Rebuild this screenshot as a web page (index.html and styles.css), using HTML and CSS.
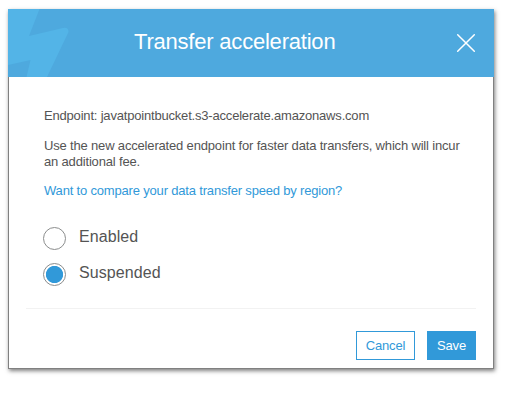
FILE: index.html
```html
<!DOCTYPE html>
<html lang="en">
<head>
<meta charset="utf-8">
<title>Transfer acceleration</title>
<link rel="stylesheet" href="styles.css">
</head>
<body>
<section class="dialog" role="dialog" aria-labelledby="title">
  <header class="header">
    <svg class="bolt" width="62" height="68" viewBox="0 0 62 68" aria-hidden="true"><path d="M0 0H31.500L21 27L55 19Q60.500 18 60.500 23L39 68H18.500L22.500 51L0 56Z"/></svg>
    <h1 class="title" id="title">Transfer acceleration</h1>
    <button class="close" aria-label="Close"><svg width="20" height="20" viewBox="0 0 20 20"><path d="M1.700 1.700L18.300 18.300M18.300 1.700L1.700 18.300"/></svg></button>
  </header>
  <div class="body">
    <p class="endpoint">Endpoint: javatpointbucket.s3-accelerate.amazonaws.com</p>
    <p class="description">Use the new accelerated endpoint for faster data transfers, which will incur<br>an additional fee.</p>
    <a class="link" href="#">Want to compare your data transfer speed by region?</a>
    <div class="options">
      <label class="option"><input type="radio" name="state"><span>Enabled</span></label>
      <label class="option"><input type="radio" name="state" checked><span>Suspended</span></label>
    </div>
  </div>
  <footer class="footer">
    <button class="button cancel">Cancel</button>
    <button class="button save">Save</button>
  </footer>
</section>
</body>
</html>
```
FILE: styles.css
```css
* { box-sizing: border-box; }
body {
  margin: 0;
  min-height: 100vh;
  padding: 9px 0 0 8px;
  background: #fff;
  color: #545454;
  font: 13px/16px "Liberation Sans", Arial, sans-serif;
}
p, h1 { margin: 0; font-weight: 400; }
button { font: inherit; cursor: pointer; }
.dialog {
  display: flex;
  flex-direction: column;
  width: 486px;
  height: 360px;
  background: #fff;
  border: 1px solid #808080;
  border-top: 0;
  box-shadow: 1px 2px 4px rgba(0, 0, 0, .5);
}
.header {
  position: relative;
  display: flex;
  align-items: center;
  flex: none;
  height: 68px;
  margin: 0 -1px;
  padding: 0 18px 0 126px;
  background: #4ea9de;
  color: #fff;
}
.bolt { position: absolute; left: 0; top: 0; fill: #53b4e7; }
.title { font-size: 22px; line-height: 28px; letter-spacing: -.21px; padding-bottom: 2px; white-space: nowrap; }
.close { display: flex; margin-left: auto; padding: 0; border: 0; background: none; }
.close path { stroke: #fff; stroke-width: 1.500; stroke-linecap: round; }
.body { padding: 31px 20px 0 35px; white-space: nowrap; }
.endpoint { letter-spacing: -.19px; }
.description { margin: 14px 0 13px; letter-spacing: -.17px; }
.link { display: block; color: #3199d9; letter-spacing: -.18px; text-decoration: none; }
.options { display: grid; gap: 12px; margin-top: 27px; }
.option { display: flex; align-items: center; gap: 13px; height: 24px; margin-left: -1px; font-size: 16px; letter-spacing: .08px; }
.option span { padding-bottom: 3px; }
.option input {
  appearance: none;
  width: 23px;
  height: 23px;
  margin: 0;
  border: 1px solid #8b8d8d;
  border-radius: 50%;
}
.option input:checked { background: radial-gradient(circle closest-side, #3199d9 8.200px, transparent 9px); }
.footer {
  display: flex;
  justify-content: flex-end;
  gap: 12px;
  height: 60px;
  margin: auto 17px 0;
  padding-top: 22px;
  border-top: 1px solid #f2f2f2;
}
.button { height: 29px; padding: 0; border: 1px solid #3199d9; letter-spacing: -.2px; }
.cancel { width: 59px; background: #fff; color: #3199d9; }
.save { width: 49px; background: #3199d9; color: #fff; }
```
